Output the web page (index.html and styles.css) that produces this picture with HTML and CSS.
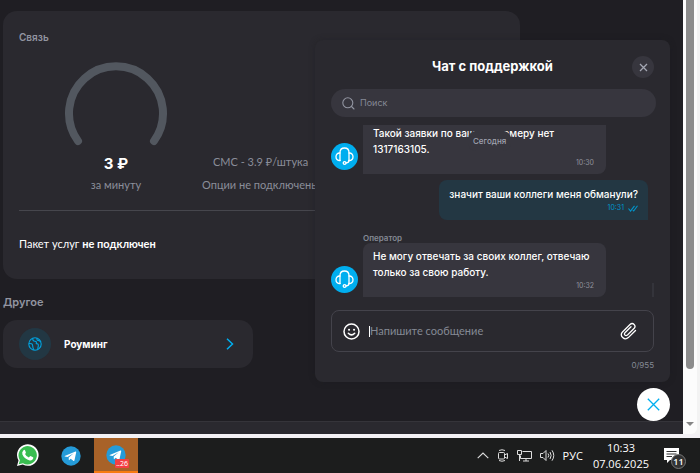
FILE: index.html
```html
<!DOCTYPE html>
<html lang="ru">
<head>
<meta charset="utf-8">
<title>Связь</title>
<link rel="stylesheet" href="styles.css">
</head>
<body>
<svg class="defs" aria-hidden="true">
  <symbol id="headset" viewBox="0 0 27 27">
    <g fill="none" stroke="#fff" stroke-width="1.3" stroke-linecap="round" stroke-linejoin="round">
      <path d="M9 17.5V9.5Q9 5 13.5 5T18 9.5V17.5"/>
      <path d="M9 10C6.5 9.8 5 11.500 5 13.700S6.500 17.500 9 17.500M18 10C20.500 9.800 22 11.500 22 13.700S20.500 17.500 18 17.500"/>
      <path d="M18 17.500Q18 19.800 15 20"/>
      <circle cx="13.600" cy="20" r="1.400"/>
    </g>
  </symbol>
  <symbol id="plane" viewBox="0 0 20 20">
    <circle cx="10" cy="10" r="9.700" fill="#259bd8"/>
    <path fill="#fff" d="M3.700 9.900 14.500 5.500Q15.400 5.300 15.200 6.300L13.500 14.300Q13.200 15.300 12.300 14.700L9.700 12.800 8.300 14.100Q7.800 14.400 7.800 13.700L7.700 11.400 12.700 7.200 6.500 11.100 3.900 10.400Q3.300 10.100 3.700 9.900Z"/>
  </symbol>
</svg>

<div class="browser">
  <div class="page">
    <main class="content">
      <section class="card plan">
        <h2 class="label">Связь</h2>
        <div class="usage">
          <div class="calls">
            <svg class="gauge" viewBox="0 0 104 84" aria-hidden="true">
              <path d="M14 79A47 47 0 1 1 90 79" fill="none" stroke="#52575f" stroke-width="8" stroke-linecap="round"/>
            </svg>
            <strong class="price">3 ₽</strong>
            <span class="muted">за минуту</span>
          </div>
          <div class="options">
            <span class="muted">СМС - 3.9 ₽/штука</span>
            <span class="muted">Опции не подключены</span>
          </div>
        </div>
        <p class="package">Пакет услуг <b>не подключен</b></p>
      </section>
      <h2 class="label other">Другое</h2>
      <a class="card roaming" href="#">
        <span class="globe">
          <svg width="14" height="14" viewBox="0 0 14 14" fill="none" stroke="#00a3e0" stroke-width="1.100" stroke-linejoin="round" aria-hidden="true">
            <circle cx="7" cy="7" r="6.200"/>
            <path d="M4.800 1.300Q4.500 4 6.800 4.200T8.200 6.600Q10.800 6.600 10.300 8.800T9.800 12.500M9 1.200Q8.500 3 10.200 3.400T13 5.200M.9 6.500Q4.500 6.200 4.600 8.500T6 13"/>
          </svg>
        </span>
        <b>Роуминг</b>
        <svg class="chevron" width="8" height="12" viewBox="0 0 8 12" fill="none" stroke="#00aeef" stroke-width="1.500" aria-hidden="true"><path d="M1 .7 6.500 6 1 11.300"/></svg>
      </a>
    </main>
    <footer class="footer"></footer>

    <section class="chat" aria-label="Чат с поддержкой">
      <header class="chat-head">
        <h1>Чат с поддержкой</h1>
        <button class="close" aria-label="Закрыть"><svg width="9" height="9" viewBox="0 0 9 9" stroke="#a4a7b3" stroke-width="1.300"><path d="M1 1 8 8M8 1 1 8"/></svg></button>
      </header>
      <label class="search">
        <svg width="13" height="13" viewBox="0 0 13 13" fill="none" stroke="#9295a1" stroke-width="1.100" stroke-linecap="round" aria-hidden="true"><circle cx="5.800" cy="5.800" r="5"/><path d="M9.500 9.500 12 12"/></svg>
        <input type="search" placeholder="Поиск" aria-label="Поиск">
      </label>
      <div class="messages">
        <span class="day">Сегодня</span>
        <div class="row">
          <svg class="avatar" aria-hidden="true"><use href="#headset"/></svg>
          <div class="bubble first">
            <p>Такой заявки по вашему номеру нет 1317163105.</p>
            <time>10:30</time>
          </div>
        </div>
        <div class="row mine">
          <div class="bubble">
            <p>значит ваши коллеги меня обманули?</p>
            <time>10:31 <svg width="10" height="7" viewBox="0 0 10 7" fill="none" stroke="#0095cc" stroke-width="1.100" aria-hidden="true"><path d="M.5 3.500 2.500 6 6.500.8M4.800 5 5.700 6 9.500.8"/></svg></time>
          </div>
        </div>
        <div class="author">Оператор</div>
        <div class="row">
          <svg class="avatar" aria-hidden="true"><use href="#headset"/></svg>
          <div class="bubble">
            <p>Не могу отвечать за своих коллег, отвечаю только за свою работу.</p>
            <time>10:32</time>
          </div>
        </div>
        <span class="thumb-hint"></span>
      </div>
      <div class="composer">
        <button aria-label="Смайлики"><svg width="17" height="17" viewBox="0 0 17 17" fill="none" stroke="#fff" stroke-width="1.500" stroke-linecap="round"><circle cx="8.500" cy="8.500" r="7.500"/><path d="M5.300 10.300Q8.500 13.500 11.700 10.300"/><path d="M6 6.700H6.100M11 6.700H11.100" stroke-width="2"/></svg></button>
        <span class="caret"></span>
        <input type="text" placeholder="Напишите сообщение" aria-label="Сообщение">
        <button aria-label="Прикрепить файл"><svg width="17" height="18" viewBox="0 0 17 18" fill="none" stroke="#fff" stroke-width="1.300" stroke-linecap="round"><path d="M15.500 8.500 8.300 15.600C4.500 19 -.900 13.700 2.500 10L10 2.500C12.900-.200 16.700 3.700 14 6.500L7.500 13C5.500 14.600 3.500 12.500 5 10.700L11 4.700"/></svg></button>
      </div>
      <div class="counter">0/955</div>
    </section>
    <button class="fab" aria-label="Свернуть чат"><svg width="13" height="13" viewBox="0 0 13 13" stroke="#00aeef" stroke-width="1.300"><path d="M.8.8 12.200 12.200M12.200.8.8 12.200"/></svg></button>
  </div>
  <div class="scrollbar"><div class="thumb"></div><div class="arrow"></div></div>
</div>

<footer class="taskbar">
  <button class="app" aria-label="WhatsApp">
    <svg width="23" height="23" viewBox="0 0 23 23"><path fill="#fff" d="M1 22 2.500 16.500A10.800 10.800 0 1 1 6.800 20.600Z"/><path fill="#39bd50" d="M2.700 20.300 3.900 16.200A9.200 9.200 0 1 1 7 19.200Z"/><path fill="#fff" d="M7.500 6.200Q8.500 5.500 9 6.300L9.900 8.400Q10 9 9 10.100 10.300 12.600 12.800 13.600L14 12.200Q14.400 11.900 15 12.200L17 13.200Q17.500 13.500 17.200 14.500 16.200 16.800 13.700 16.400 8.500 15.200 6.400 10.500 5.600 7.900 7.500 6.200Z"/></svg>
  </button>
  <button class="app" aria-label="Telegram"><svg width="20" height="20"><use href="#plane"/></svg></button>
  <button class="app active" aria-label="Telegram, непрочитанные"><svg width="20" height="20"><use href="#plane"/></svg><span class="unread">..26</span></button>
  <div class="tray">
    <svg width="12" height="7" viewBox="0 0 12 7" fill="none" stroke="#ddd" stroke-width="1.100"><path d="M.7 6.200 6 1 11.300 6.200"/></svg>
    <svg width="12" height="13" viewBox="0 0 12 13" fill="none" stroke="#ddd"><rect x="1.500" y="3.500" width="6" height="6.500" rx="1"/><path d="M7.500 6 10.500 4.500V9.500L7.500 8M2 1.500Q5 0 8 1.500M2 11.500Q5 13 8 11.500"/></svg>
    <svg width="15" height="13" viewBox="0 0 15 13" fill="none" stroke="#ddd"><path d="M5.500 2.500H14.500V9.500H3.500V6.500M6 12H12M9 9.500V12M.5 1.500H4.500V5.500H.5ZM2.500 5.500V12"/></svg>
    <svg width="15" height="13" viewBox="0 0 15 13" fill="none" stroke="#ddd"><path d="M.5 4.500H3L6 1.500V11.500L3 8.500H.5ZM8 4.500Q9.500 6.500 8 8.500M10 3Q12.300 6.500 10 10M12 1.300Q15.500 6.500 12 11.700"/></svg>
    <span class="lang">РУС</span>
    <div class="clock"><span>10:33</span><span>07.06.2025</span></div>
    <div class="notice">
      <svg width="15" height="15" viewBox="0 0 15 15"><path fill="#fff" d="M0 0H15V12H6L3 15V12H0Z"/><path stroke="#333" d="M2.500 3.500H12.500M2.500 6H12.500M2.500 8.500H8"/></svg>
      <span>11</span>
    </div>
  </div>
</footer>
</body>
</html>
```
FILE: styles.css
```css
* { box-sizing: border-box; }

body {
  margin: 0;
  min-height: 100vh;
  display: flex;
  flex-direction: column;
  background: #1c1d1d;
  color: #fff;
  font: 500 11px/16px Inter, "Noto Sans", sans-serif;
}

h1, h2, p { margin: 0; }
button { margin: 0; padding: 0; border: 0; background: none; color: inherit; font: inherit; }
input { min-width: 0; padding: 0; border: 0; outline: 0; background: none; color: #fff; font: inherit; }
svg { display: block; flex: none; }
.defs { position: absolute; width: 0; height: 0; }

.browser {
  flex: 1;
  display: flex;
  border-bottom: 4px solid #f3f1f5;
  background: #f3f3f3;
}

.page {
  position: relative;
  flex: 1;
  display: flex;
  flex-direction: column;
  background: #1f1e23;
}

.content { flex: 1; padding: 11px 2px 0 3px; }
.card { border-radius: 14px; background: #2a292f; }
.plan { max-width: 517px; padding: 18px 16px 27px; }
.label { color: #9295a1; font-size: 10px; line-height: 16px; font-weight: 600; }

.usage {
  display: flex;
  padding: 17px 0 17px 45px;
  border-bottom: 1px solid #46464d;
}
.calls { width: 104px; display: flex; flex-direction: column; align-items: center; }
.gauge { width: 104px; height: 84px; }
.price { margin-top: 8px; font-size: 15px; line-height: 20px; font-weight: 700; }
.calls .muted { margin-top: 3px; }
.muted, .package, .composer input { font-family: Lato, "Noto Sans", sans-serif; }
.muted { color: #8b8e9a; font-weight: 400; }
.options {
  display: flex;
  flex-direction: column;
  align-items: center;
  justify-content: flex-end;
  gap: 7px;
  margin-left: 34px;
}
.package { margin-top: 25px; font-weight: 400; font-size: 11px; }
.package b { font-weight: 700; }

.other { margin: 15px 0 10px; font-size: 11px; }
.roaming {
  width: 250px;
  display: flex;
  align-items: center;
  gap: 13px;
  padding: 8px 19px 8px 16px;
  color: #fff;
  font-size: 10px;
  text-decoration: none;
}
.globe { width: 32px; height: 32px; display: grid; place-items: center; border-radius: 50%; background: #223743; }
.chevron { margin-left: auto; }
.footer { height: 13px; border-top: 1px solid #35343a; background: #2a292f; }

.chat {
  position: absolute;
  right: 13px;
  bottom: 52px;
  width: 355px;
  padding: 16px 14px 9px 16px;
  border-radius: 8px;
  background: #2a292f;
  box-shadow: 0 0 6px #1b1a1f55;
}
.chat-head { position: relative; padding: 0 2px 0 0; text-align: center; }
.chat-head h1 { font-size: 13px; line-height: 20px; font-weight: 700; }
.close {
  position: absolute;
  top: 0;
  right: 2px;
  width: 22px;
  height: 22px;
  display: grid;
  place-items: center;
  border-radius: 50%;
  background: #37363e;
}
.search {
  height: 28px;
  margin-top: 13px;
  display: flex;
  align-items: center;
  gap: 5px;
  padding: 0 11px;
  border-radius: 14px;
  background: #37363e;
}
.search input { flex: 1; font-size: 9px; font-weight: 400; }
::placeholder { color: #858995; opacity: 1; }

.messages { position: relative; margin: 8px 8px 0 0; }
.row { display: flex; align-items: flex-end; gap: 5px; }
.avatar { width: 27px; height: 27px; margin-bottom: 4px; border-radius: 50%; background: #00aeef; }
.bubble {
  width: 243px;
  padding: 5px 10px;
  border-radius: 8px 8px 8px 0;
  background: #37363e;
  font-size: 10px;
}
.bubble.first { padding-top: 0; border-radius: 0 0 8px 0; }
.bubble time { display: flex; justify-content: flex-end; align-items: center; gap: 4px; padding-right: 2px; color: #8f919c; font-size: 7px; line-height: 12px; font-weight: 400; }
.mine { justify-content: flex-end; margin: 6px 0 13px; }
.mine .bubble { width: auto; padding: 6px 10px; border-radius: 8px 8px 0 8px; background: #233743; }
.mine time { padding-right: 0; color: #0095cc; }
.author { margin-left: 32px; color: #858995; font-size: 8px; line-height: 10px; font-weight: 600; }
.day {
  position: absolute;
  top: 6px;
  left: 137px;
  padding: 3px 5px;
  border-radius: 8px;
  background: #37363e;
  color: #a0a3b0;
  font-size: 8px;
  line-height: 14px;
}
.thumb-hint { position: absolute; right: -6px; bottom: 0; width: 2px; height: 14px; background: #34343b; }

.composer {
  height: 42px;
  margin: 13px 2px 5px 0;
  display: flex;
  align-items: center;
  padding: 0 16px 0 11px;
  border: 1px solid #44434b;
  border-radius: 8px;
}
.composer input { flex: 1; font-weight: 400; font-size: 11px; }
.caret { width: 1px; height: 11px; margin-left: 9px; background: #fff; }
.counter { margin-right: 2px; color: #858995; font-size: 8px; font-weight: 400; text-align: right; }

.fab {
  position: absolute;
  right: 13px;
  bottom: 13px;
  width: 33px;
  height: 33px;
  display: grid;
  place-items: center;
  border-radius: 50%;
  background: #fff;
}

.scrollbar {
  width: 14px;
  margin-right: 3px;
  display: flex;
  flex-direction: column;
  align-items: center;
  border-radius: 0 0 6px 0;
  background: #fcfcfc;
}
.thumb { width: 8px; flex: 1; border-radius: 0 0 4px 4px; background: #8b8b8b; }
.arrow { margin: 53px 0 8px; border: 4px solid transparent; border-top: 4px solid #858585; border-bottom: 0; }

.taskbar { height: 35px; display: flex; padding-left: 6px; background: #1c1d1d; }
.app { position: relative; width: 44px; display: grid; place-items: center; }
.app:first-child { width: 42px; }
.app + .app { margin-left: 1px; }
.app.active { border-bottom: 2px solid #f77b12; background: #a86228; }
.unread {
  position: absolute;
  right: 9px;
  bottom: 3px;
  padding: 0 1px;
  border-radius: 1px;
  background: #f43f43;
  font: 7px/9px "Noto Sans", sans-serif;
}
.tray { margin-left: auto; display: flex; align-items: center; gap: 8px; font-family: "Open Sans", "Noto Sans", sans-serif; font-weight: 400; }
.clock { display: flex; flex-direction: column; align-items: center; margin-left: 2px; }
.notice { position: relative; width: 36px; margin-left: 7px; }
.notice span {
  position: absolute;
  left: 7px;
  top: 6px;
  width: 15px;
  border: 1px solid #777;
  border-radius: 50%;
  background: #333;
  font-size: 9px;
  font-weight: 600;
  line-height: 13px;
  text-align: center;
}
```
